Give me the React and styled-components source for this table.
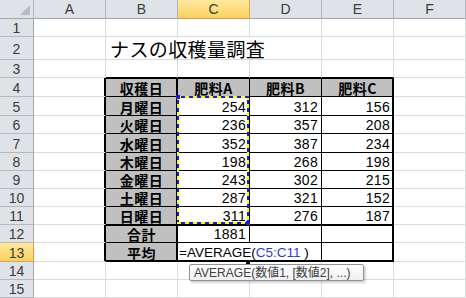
import React from "react";
import styled, { createGlobalStyle } from "styled-components";

const GRID = "#dadcdd";
const HEAD_LINE = "#b4b9c0";
const BLACK = "#000";

const ROW_HEIGHTS = [19, 18, 23, 18, 19, 19, 18, 19, 18, 18, 18, 18, 18, 19, 18, 18];
const COL_LETTERS = ["A", "B", "C", "D", "E", "F"];

const days = ["月曜日", "火曜日", "水曜日", "木曜日", "金曜日", "土曜日", "日曜日"];
const fertA = [254, 236, 352, 198, 243, 287, 311];
const fertB = [312, 357, 387, 268, 302, 321, 276];
const fertC = [156, 208, 234, 198, 215, 152, 187];

const GlobalStyle = createGlobalStyle`
  body {
    margin: 0;
    background: #fff;
    font-family: "Noto Sans CJK JP", "Liberation Sans", sans-serif;
  }
`;

const Sheet = styled.div`
  position: relative;
  width: 466px;
  height: 298px;
  overflow: hidden;
  display: grid;
  grid-template-columns: 34px repeat(6, 72px);
  grid-template-rows: ${ROW_HEIGHTS.map(h => `${h}px`).join(" ")};
`;

const Corner = styled.div`
  position: relative;
  box-sizing: border-box;
  background: #dfe3e8;
  border-right: 1px solid ${HEAD_LINE};
  border-bottom: 1px solid #9ea6b0;
  &::after {
    content: "";
    position: absolute;
    right: 3px;
    bottom: 3px;
    border-style: solid;
    border-width: 0 0 10px 10px;
    border-color: transparent transparent #b6bcc4 transparent;
  }
`;

const ColHead = styled.div`
  box-sizing: border-box;
  display: flex;
  align-items: center;
  justify-content: center;
  font-family: "Liberation Sans", sans-serif;
  font-size: 14px;
  line-height: 1;
  color: #3b3b3b;
  background: ${({ $active }) =>
    $active ? "linear-gradient(#ffe9a1, #f9d25e)" : "#dfe3e8"};
  border-right: 1px solid ${({ $active }) => ($active ? "#e2a53f" : HEAD_LINE)};
  border-bottom: 1px solid ${({ $active }) => ($active ? "#e29a2a" : "#9ea6b0")};
`;

const RowHead = styled.div`
  box-sizing: border-box;
  display: flex;
  align-items: center;
  justify-content: center;
  padding-top: 1px;
  font-family: "Liberation Sans", sans-serif;
  font-size: 14px;
  line-height: 1;
  color: #3b3b3b;
  background: ${({ $active }) =>
    $active ? "linear-gradient(#ffe9a1, #f9d25e)" : "#dfe3e8"};
  border-right: 1px solid ${({ $active }) => ($active ? "#e29a2a" : "#9ea6b0")};
  border-bottom: 1px solid ${({ $active }) => ($active ? "#e2a53f" : HEAD_LINE)};
`;

const Cell = styled.div`
  box-sizing: border-box;
  display: flex;
  align-items: center;
  justify-content: ${({ $align }) => $align || "flex-start"};
  padding: 1px 3px 0;
  white-space: nowrap;
  overflow: visible;
  line-height: 1;
  grid-column: ${({ $span }) => ($span ? `span ${$span}` : "auto")};
  background: ${({ $fill }) => $fill || "transparent"};
  border-right: 1px solid ${({ $right }) => $right || GRID};
  border-bottom: 1px solid ${({ $bottom }) => $bottom || GRID};
  box-shadow: ${({ $shadow }) => $shadow || "none"};
  font-size: 14px;
  font-weight: ${({ $bold }) => ($bold ? 700 : 400)};
  letter-spacing: ${({ $bold }) => ($bold ? "0.5px" : "0")};
  color: #000;
  z-index: ${({ $z }) => $z || 0};
`;

const Num = styled.span`
  font-family: "Liberation Sans", sans-serif;
  font-size: 14px;
  letter-spacing: 0.3px;
`;

const Title = styled.span`
  font-size: 19px;
  padding-left: 1px;
  letter-spacing: 0.4px;
`;

const Formula = styled.span`
  font-family: "Liberation Sans", sans-serif;
  font-size: 13.5px;
  color: #000;
`;

const Ref = styled.span`
  color: #1f3fd8;
`;

const Ants = styled.div`
  position: absolute;
  left: 177px;
  top: 96px;
  width: 72px;
  height: 128px;
  box-sizing: border-box;
  pointer-events: none;
  background:
    repeating-linear-gradient(90deg, #ffff00 0 4px, #1b1bd0 4px 8px) top / 100% 2px no-repeat,
    repeating-linear-gradient(90deg, #ffff00 0 4px, #1b1bd0 4px 8px) bottom / 100% 2px no-repeat,
    repeating-linear-gradient(180deg, #ffff00 0 4px, #1b1bd0 4px 8px) left / 2px 100% no-repeat,
    repeating-linear-gradient(180deg, #ffff00 0 4px, #1b1bd0 4px 8px) right / 2px 100% no-repeat;
`;

const Handle = styled.div`
  position: absolute;
  width: 4px;
  height: 4px;
  background: #1b1bd0;
  left: ${({ $x }) => $x}px;
  top: ${({ $y }) => $y}px;
`;

const FillHandle = styled.div`
  position: absolute;
  left: 246px;
  top: 261px;
  width: 4px;
  height: 3px;
  background: #000;
`;

const Tip = styled.div`
  position: absolute;
  left: 189px;
  top: 264px;
  width: 175px;
  height: 17px;
  box-sizing: border-box;
  display: flex;
  align-items: center;
  padding-left: 4px;
  border: 1px solid #8f9296;
  border-radius: 2px;
  background: linear-gradient(#ffffff, #eef0f3);
  box-shadow: 2px 2px 2px rgba(0, 0, 0, 0.18);
  font-family: "Liberation Sans", "Noto Sans CJK JP", sans-serif;
  font-size: 12px;
  line-height: 1;
  color: #404040;
  white-space: nowrap;
`;

function cellProps(r, c) {
  const inTableRow = r >= 4 && r <= 13;
  const inTableCol = c >= 2 && c <= 5;
  const p = {};
  const shadows = [];
  if (inTableRow && c >= 1 && c <= 5) p.$right = BLACK;
  if (inTableCol && r >= 3 && r <= 13) p.$bottom = BLACK;
  if (inTableRow && (c === 1 || c === 2 || c === 5)) shadows.push("inset -1px 0 0 #000");
  if (inTableCol && (r === 4 || r === 12)) shadows.push("inset 0 1px 0 #000");
  if (inTableCol && r === 13) shadows.push("inset 0 -1px 0 #000");
  if (shadows.length) p.$shadow = shadows.join(", ");
  if (inTableRow && (c === 2 || r === 4) && inTableCol) {
    p.$fill = "#c0c0c0";
    p.$bold = true;
    p.$align = "center";
  }
  return p;
}

function renderCell(r, c) {
  const key = `${r}-${c}`;
  const props = cellProps(r, c);
  if (r === 2 && c === 2) {
    return (
      <Cell key={key} {...props} $span={3}>
        <Title>ナスの収穫量調査</Title>
      </Cell>
    );
  }
  if (r === 2 && (c === 3 || c === 4)) return null;
  if (r === 4 && c >= 2 && c <= 5) {
    const heads = ["収穫日", "肥料A", "肥料B", "肥料C"];
    return (
      <Cell key={key} {...props}>
        {heads[c - 2]}
      </Cell>
    );
  }
  if (r >= 5 && r <= 11 && c >= 2 && c <= 5) {
    const i = r - 5;
    if (c === 2) {
      return (
        <Cell key={key} {...props}>
          {days[i]}
        </Cell>
      );
    }
    const v = [fertA, fertB, fertC][c - 3][i];
    return (
      <Cell key={key} {...props} $align="flex-end" $fill="#fff">
        <Num>{v}</Num>
      </Cell>
    );
  }
  if (r === 12 && c === 2) {
    return (
      <Cell key={key} {...props}>
        合計
      </Cell>
    );
  }
  if (r === 12 && c === 3) {
    return (
      <Cell key={key} {...props} $align="flex-end" $fill="#fff">
        <Num>1881</Num>
      </Cell>
    );
  }
  if (r === 13 && c === 2) {
    return (
      <Cell key={key} {...props}>
        平均
      </Cell>
    );
  }
  if (r === 13 && c === 3) {
    return (
      <Cell key={key} {...props} $span={2} $fill="#fff" $z={1} style={{ paddingLeft: 1 }}>
        <Formula>
          =AVERAGE(<Ref>C5:C11</Ref> )
        </Formula>
      </Cell>
    );
  }
  if (r === 13 && c === 4) return null;
  return <Cell key={key} {...props} />;
}

export default function App() {
  const rows = [];
  for (let r = 1; r <= 15; r++) {
    rows.push(
      <RowHead key={`h${r}`} $active={r === 13}>
        {r}
      </RowHead>
    );
    for (let c = 1; c <= 6; c++) {
      const cell = renderCell(r, c);
      if (cell) rows.push(cell);
    }
  }
  return (
    <>
      <GlobalStyle />
      <Sheet>
        <Corner />
        {COL_LETTERS.map(l => (
          <ColHead key={l} $active={l === "C"}>
            {l}
          </ColHead>
        ))}
        {rows}
        <Ants />
        <Handle $x={176} $y={95} />
        <Handle $x={246} $y={221} />
        <FillHandle />
        <Tip>AVERAGE(数値1, [数値2], ...)</Tip>
      </Sheet>
    </>
  );
}
